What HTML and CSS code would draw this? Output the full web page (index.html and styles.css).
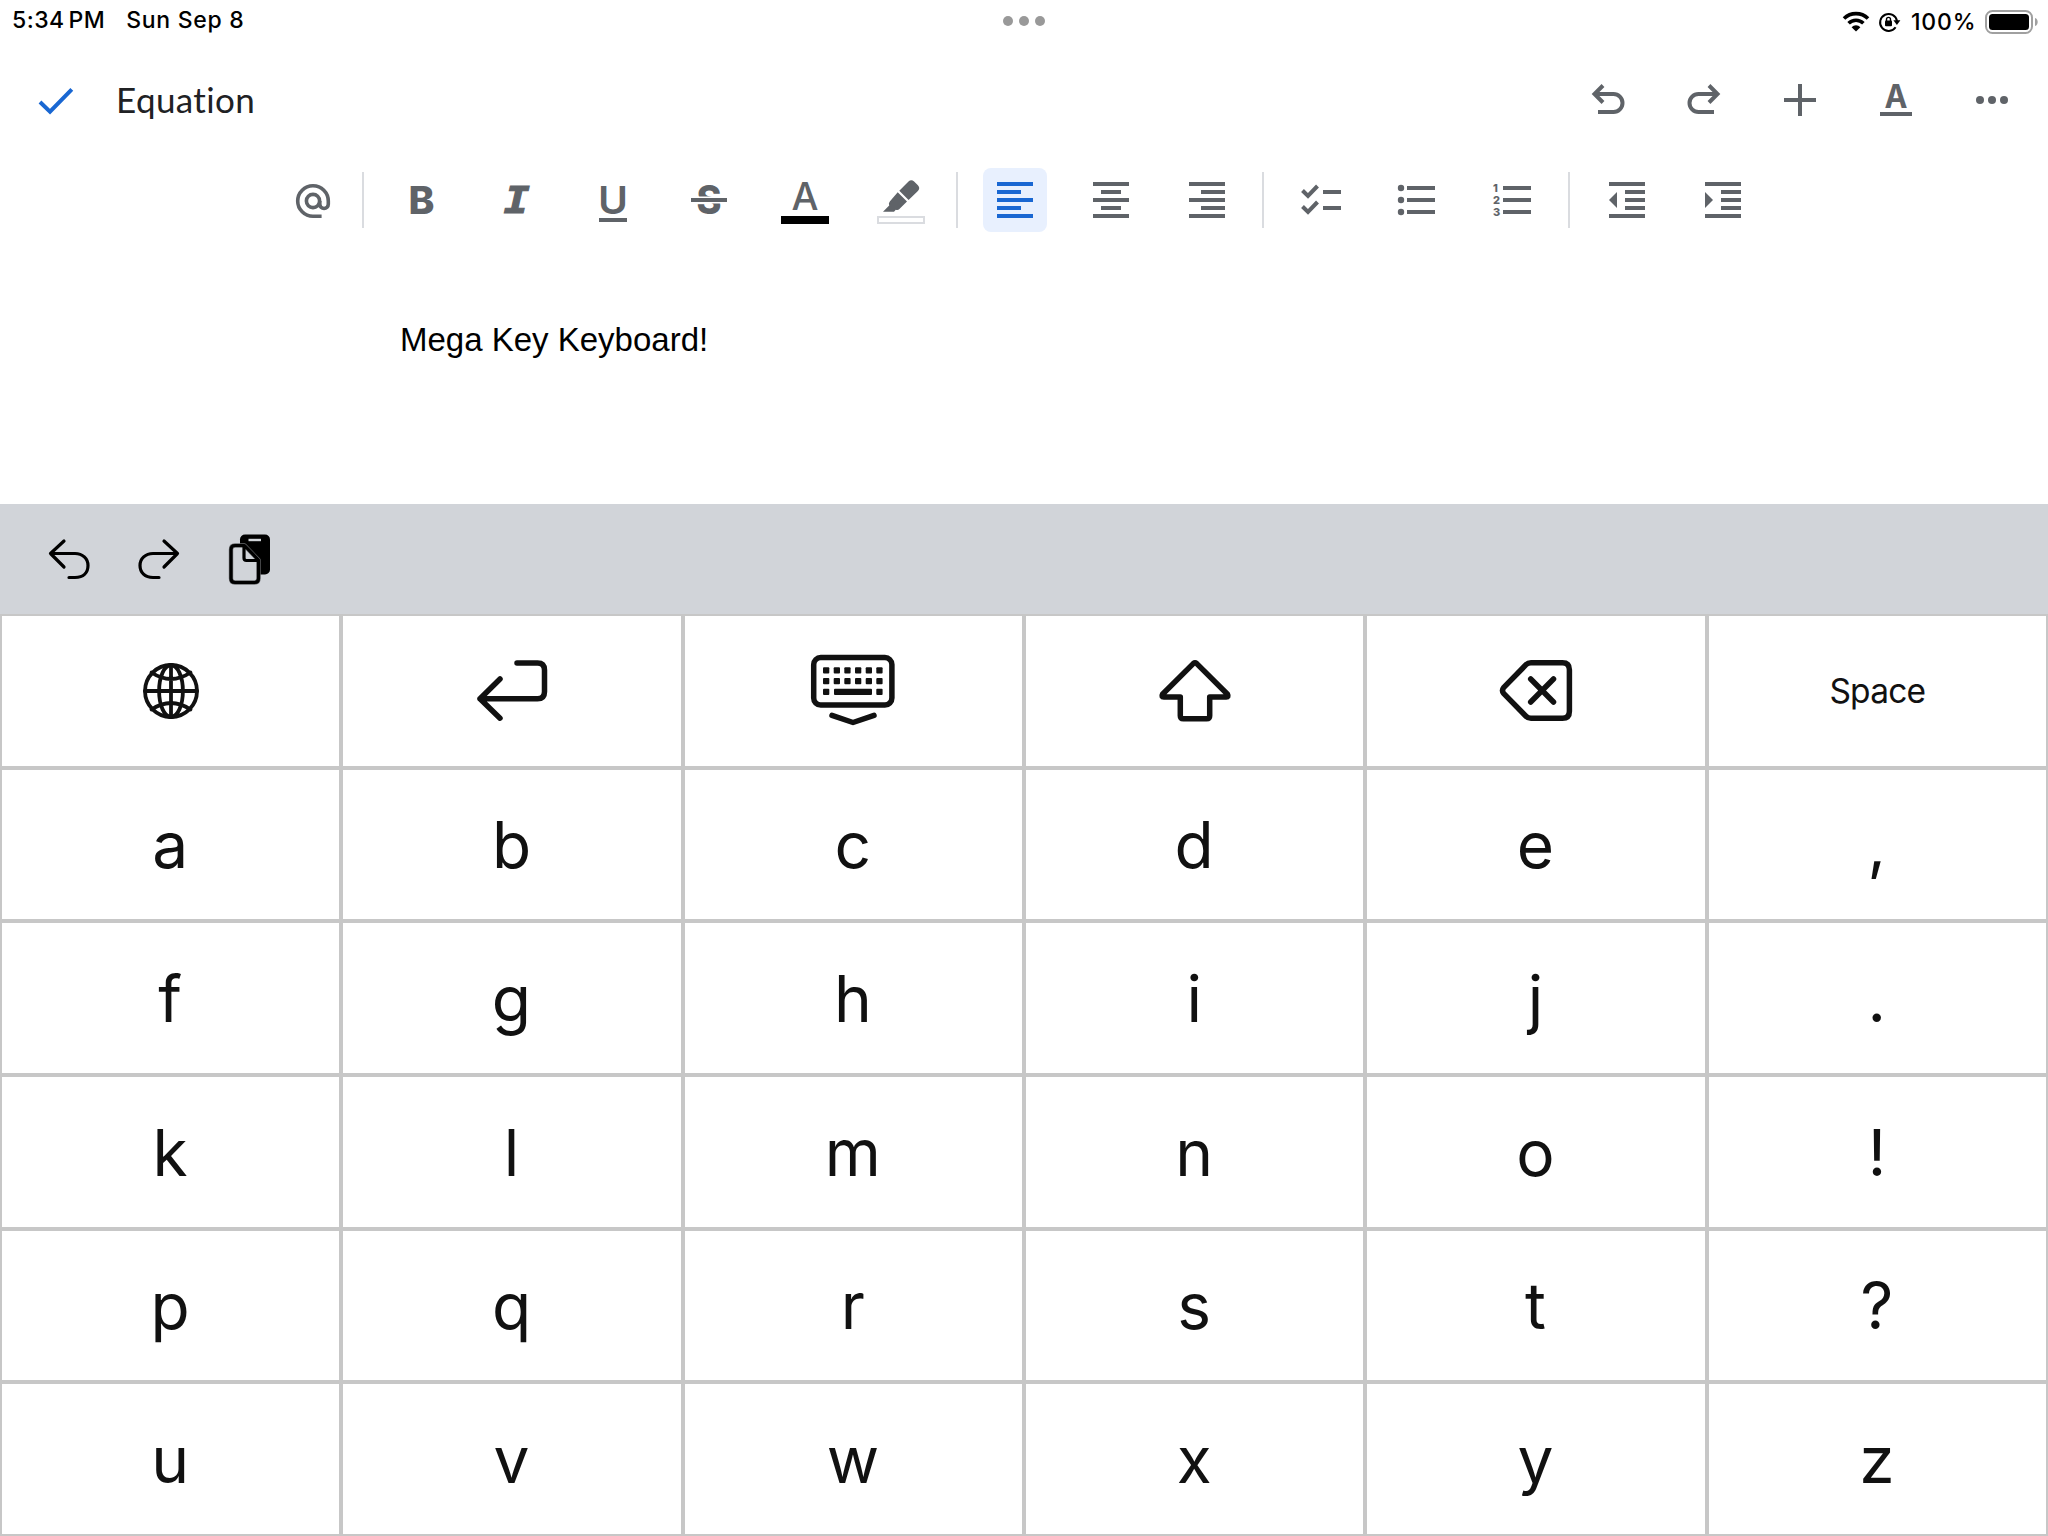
FILE: index.html
```html
<!DOCTYPE html>
<html lang="en">
<head>
<meta charset="utf-8">
<title>Equation</title>
<link rel="stylesheet" href="styles.css">
</head>
<body>
<div class="screen">
  <header class="status">
    <div class="status-left"><span class="clock">5:34<span class="thin"> </span>PM</span><span class="date">Sun Sep 8</span></div>
    <div class="multitask"><i></i><i></i><i></i></div>
    <div class="status-right">
      <svg class="wifi" width="28" height="20" viewBox="0 0 28 20"><path d="M2 6.6a17 17 0 0 1 24 0M6.6 11.3a10.5 10.5 0 0 1 14.8 0" fill="none" stroke="#000" stroke-width="3.6"/><path d="M14 19.6l-4.4-4.4a6.2 6.2 0 0 1 8.8 0z"/></svg>
      <svg class="lock" width="22" height="20" viewBox="0 0 22 20"><path d="M18 9A8.500 8.500 0 1 0 16.600 15.300" fill="none" stroke="#000" stroke-width="2"/><path d="M14.400 8.300h7l-3.500 4.800z"/><rect x="6" y="8.400" width="7" height="5.800" rx="1"/><path d="M7.500 9V7.400a2 2 0 0 1 4 0V9" fill="none" stroke="#000" stroke-width="1.400"/></svg>
      <span class="percent">100%</span>
      <svg class="battery" width="54" height="24" viewBox="0 0 54 24"><rect x="1" y="1" width="46" height="22" rx="6.5" fill="none" stroke="#a0a0a0" stroke-width="2"/><rect x="4" y="4" width="40" height="16" rx="3.5"/><path d="M50 8c3.6 1 3.6 7 0 8z" fill="#a0a0a0"/></svg>
    </div>
  </header>

  <nav class="titlebar">
    <svg class="done" width="36" height="28" viewBox="0 0 36 28"><path d="M2 15l10 9.6L33.8 2.4" fill="none" stroke="#1967d2" stroke-width="4"/></svg>
    <h1>Equation</h1>
    <div class="actions">
      <div class="slot"><svg class="ico" viewBox="0 0 48 48"><path d="M14 36h15.500a9 9 0 0 0 0-18H11M19 9.500L10.500 18l8.500 8.500"/></svg></div>
      <div class="slot"><svg class="ico" viewBox="0 0 48 48"><path d="M34 36H18.500a9 9 0 0 1 0-18H37M29 9.500l8.500 8.500-8.500 8.500"/></svg></div>
      <div class="slot"><svg class="ico" viewBox="0 0 48 48"><path d="M24 8v32M8 24h32"/></svg></div>
      <div class="slot"><svg class="ico" viewBox="0 0 48 48"><text x="12.500" y="32" class="glyph title-a" textLength="23" lengthAdjust="spacingAndGlyphs">A</text><path d="M8 38h32"/></svg></div>
      <div class="slot"><svg class="ico fill" viewBox="0 0 48 48"><circle cx="12" cy="24" r="4"/><circle cx="24" cy="24" r="4"/><circle cx="36" cy="24" r="4"/></svg></div>
    </div>
  </nav>

  <div class="toolbar">
    <div class="slot"><svg class="ico" viewBox="0 0 48 48"><g stroke-width="3.600"><circle cx="24" cy="25" r="6.600"/><path d="M32.600 40.300H24A15.300 15.300 0 1 1 39.300 25v3.200a4.200 4.200 0 0 1-8.500 0V25"/></g></svg></div>
    <i class="sep first"></i>
    <div class="slot"><svg class="ico" viewBox="0 0 48 48"><text x="11.600" y="38" class="glyph bold" textLength="26" lengthAdjust="spacingAndGlyphs">B</text></svg></div>
    <div class="slot"><svg class="ico" viewBox="0 0 48 48"><text x="10.800" y="37.300" class="glyph italic" textLength="26" lengthAdjust="spacingAndGlyphs">I</text></svg></div>
    <div class="slot"><svg class="ico" viewBox="0 0 48 48"><text x="9" y="37.500" class="glyph under" textLength="30" lengthAdjust="spacingAndGlyphs">U</text><path d="M10 44h28"/></svg></div>
    <div class="slot"><svg class="ico" viewBox="0 0 48 48"><text x="11.600" y="37.500" class="glyph strike" textLength="25" lengthAdjust="spacingAndGlyphs">S</text><path d="M6 24h36" stroke="#fff" stroke-width="7"/><path d="M6 24h36"/></svg></div>
    <div class="slot"><svg class="ico" viewBox="0 0 48 48"><text x="10.600" y="34" class="glyph color-a" textLength="27" lengthAdjust="spacingAndGlyphs">A</text><path d="M0 44h48" stroke="#000" stroke-width="8"/></svg></div>
    <div class="slot"><svg class="ico fill" viewBox="0 0 48 48"><path d="M31.500 5.500q2.800-2.600 5.600 0l3.800 3.800q2.700 2.800 0 5.600l-9.300 9.100-9.300-9.300zM20.700 16.200l9.300 9.300-7.600 7.600q-1.600 1.500-3.600.6L17 35.800H6l6.200-6.300q-1-2.500.8-4.300z"/><rect x="1" y="41" width="46" height="6" fill="#fff" stroke="#dadce0" stroke-width="2"/></svg></div>
    <i class="sep"></i>
    <div class="slot"><div class="active"><svg class="ico" viewBox="0 0 48 48"><path d="M6 8h36M6 16h24M6 24h36M6 32h24M6 40h36"/></svg></div></div>
    <div class="slot"><svg class="ico" viewBox="0 0 48 48"><path d="M6 8h36M14 16h20M6 24h36M14 32h20M6 40h36"/></svg></div>
    <div class="slot"><svg class="ico" viewBox="0 0 48 48"><path d="M6 8h36M18 16h24M6 24h36M18 32h24M6 40h36"/></svg></div>
    <i class="sep"></i>
    <div class="slot"><svg class="ico" viewBox="0 0 48 48"><path d="M26 16h18M26 32h18M5.500 14.500l5.500 5.500L20.500 10M5.500 30.500l5.500 5.500L20.500 26"/></svg></div>
    <div class="slot"><svg class="ico" viewBox="0 0 48 48"><path d="M14 12h28M14 24h28M14 36h28"/><g fill="#5f6368" stroke="none"><circle cx="8" cy="12" r="3.200"/><circle cx="8" cy="24" r="3.200"/><circle cx="8" cy="36" r="3.200"/></g></svg></div>
    <div class="slot"><svg class="ico" viewBox="0 0 48 48"><path d="M14 12h28M14 24h28M14 36h28"/><g class="glyph num"><text x="4" y="16">1</text><text x="4" y="28">2</text><text x="4" y="40">3</text></g></svg></div>
    <i class="sep"></i>
    <div class="slot"><svg class="ico" viewBox="0 0 48 48"><path d="M6 8h36M22 16h20M22 24h20M22 32h20M6 40h36"/><path d="M14 16v16l-8-8z" fill="#5f6368" stroke="none"/></svg></div>
    <div class="slot"><svg class="ico" viewBox="0 0 48 48"><path d="M6 8h36M22 16h20M22 24h20M22 32h20M6 40h36"/><path d="M6 16v16l8-8z" fill="#5f6368" stroke="none"/></svg></div>
  </div>

  <main class="document"><p>Mega Key Keyboard!</p></main>

  <section class="keyboard">
    <div class="shortcuts">
      <svg width="42" height="42" viewBox="0 0 42 42"><path d="M16 3L2.500 15.500 16 29M2.500 15.500H27c7.500 0 13 5 13 12s-4.500 12-13 12h-6"/></svg>
      <svg width="42" height="42" viewBox="0 0 42 42"><path d="M26 3l13.500 12.500L26 29M39.500 15.500H15c-7.500 0-13 5-13 12s5 12 13 12h6"/></svg>
      <svg class="paste" width="42" height="52" viewBox="0 0 42 52"><rect x="11" y="1.500" width="30" height="40" rx="5" fill="#000" stroke="none"/><path d="M19.500 7h12.500" stroke="#d1d4d9" stroke-width="2.400" stroke-linecap="butt"/><path d="M6 12.500h9.500L29.500 27v18.500q0 4-4 4H6q-4 0-4-4v-29q0-4 4-4z" fill="#d1d4d9" stroke="#6b6d70" stroke-width="4.400"/><path d="M6 12.500h9.500L29.500 27v18.500q0 4-4 4H6q-4 0-4-4v-29q0-4 4-4zM15 13v12q0 2.500 2.500 2.500H29"/></svg>
    </div>
    <div class="keys">
      <div class="key"><svg width="56" height="56" viewBox="-28 -28 56 56" stroke-width="3.800"><circle r="26"/><ellipse rx="11.900" ry="26"/><path d="M0-26V26M-26 0H26M-19.500-18.500Q0-5.500 19.500-18.500M-19.500 18.500Q0 5.500 19.500 18.500"/></svg></div>
      <div class="key"><svg width="80" height="80" viewBox="0 0 80 80"><path d="M45 12h20.500q7 0 7 7v21.700q0 7-7 7H8M28 28L8 47.700l20 19.500"/></svg></div>
      <div class="key"><svg width="96" height="80" viewBox="0 0 96 80"><rect x="8.700" y="6.600" width="78.200" height="47.400" rx="7"/><path d="M27 64.300l21 7.200 21-7.200"/><g fill="#111" stroke="none"><rect x="18" y="16.300" width="6.300" height="6.300" rx="1"/><rect x="28.700" y="16.300" width="6.300" height="6.300" rx="1"/><rect x="39.300" y="16.300" width="6.300" height="6.300" rx="1"/><rect x="50" y="16.300" width="6.300" height="6.300" rx="1"/><rect x="60.700" y="16.300" width="6.300" height="6.300" rx="1"/><rect x="71.300" y="16.300" width="6.300" height="6.300" rx="1"/><rect x="18" y="27" width="6.300" height="6.300" rx="1"/><rect x="28.700" y="27" width="6.300" height="6.300" rx="1"/><rect x="39.300" y="27" width="6.300" height="6.300" rx="1"/><rect x="50" y="27" width="6.300" height="6.300" rx="1"/><rect x="60.700" y="27" width="6.300" height="6.300" rx="1"/><rect x="71.300" y="27" width="6.300" height="6.300" rx="1"/><rect x="18" y="37.700" width="6.300" height="6.300" rx="1"/><rect x="29" y="37.700" width="38" height="6.300" rx="1"/><rect x="71.300" y="37.700" width="6.300" height="6.300" rx="1"/></g></svg></div>
      <div class="key"><svg width="80" height="80" viewBox="0 0 80 80"><path d="M38.500 12.400q1.500-1.300 3 0L72.500 43.300q1.500 2.700-1.300 2.700H54.700v18.700q0 3-3 3H28.300q-3 0-3-3V46H8.800q-2.800 0-1.300-2.700z"/></svg></div>
      <div class="key"><svg width="80" height="80" viewBox="0 0 80 80"><path d="M35 11.700h31.400q7 0 7 7v41.600q0 7-7 7H35q-3 0-5-2L7.600 42.300q-2.200-2.800 0-5.600L30 13.700q2-2 5-2zM34.700 28l22.800 23M57.500 28L34.700 51"/></svg></div>
      <div class="key word">Space</div>
      <div class="key">a</div><div class="key">b</div><div class="key">c</div><div class="key">d</div><div class="key">e</div><div class="key">,</div>
      <div class="key">f</div><div class="key">g</div><div class="key">h</div><div class="key">i</div><div class="key">j</div><div class="key">.</div>
      <div class="key">k</div><div class="key">l</div><div class="key">m</div><div class="key">n</div><div class="key">o</div><div class="key">!</div>
      <div class="key">p</div><div class="key">q</div><div class="key">r</div><div class="key">s</div><div class="key">t</div><div class="key">?</div>
      <div class="key">u</div><div class="key">v</div><div class="key">w</div><div class="key">x</div><div class="key">y</div><div class="key">z</div>
    </div>
  </section>
</div>
</body>
</html>
```
FILE: styles.css
```css
* { box-sizing: border-box; }
body { margin: 0; background: #fff; }
svg { display: block; flex: none; overflow: visible; }

.screen {
  width: 2048px;
  height: 1536px;
  display: flex;
  flex-direction: column;
  overflow: hidden;
  font-family: Inter, "Liberation Sans", sans-serif;
}

/* status bar */
.status {
  height: 40px;
  display: grid;
  grid-template-columns: 1fr auto 1fr;
  align-items: center;
  color: #000;
  font-size: 23px;
  font-weight: 500;
  line-height: 40px;
}
.status-left { display: flex; gap: 21px; padding-left: 12px; }
.clock { letter-spacing: 0.5px; }
.thin { font-size: 12px; }
.date { letter-spacing: 0.7px; }
.multitask { display: flex; gap: 6px; padding-bottom: 2px; }
.multitask i { width: 10px; height: 10px; border-radius: 50%; background: #999; }
.status-right { display: flex; align-items: center; justify-content: flex-end; padding-right: 9px; }
.lock { margin-left: 9px; }
.percent { margin-left: 10px; width: 65px; white-space: nowrap; letter-spacing: 0.8px; }
.battery { margin-left: 9px; }

/* title bar */
.titlebar {
  height: 120px;
  display: flex;
  align-items: center;
  padding: 0 8px 0 38px;
}
.titlebar h1 {
  margin: 0 auto 3px 42px;
  color: #202124;
  font: 400 35px/48px Lato, "Open Sans", sans-serif;
  font-variant-ligatures: none;
  letter-spacing: 0.4px;
}
.done { margin-top: 1px; }
.actions { display: flex; }
.slot { width: 96px; display: flex; justify-content: center; align-items: center; }
.ico { width: 48px; height: 48px; fill: none; stroke: #5f6368; stroke-width: 4; }
.ico.fill { fill: #5f6368; stroke: none; }

/* formatting toolbar */
.toolbar { height: 80px; display: flex; align-items: center; padding-left: 265px; }
.sep { width: 2px; height: 56px; margin: 0 9px 0 7px; background: #dadce0; }
.sep.first { margin-left: 1px; }
.active { padding: 8px; border-radius: 8px; background: #e8f0fe; }
.active .ico { stroke: #1967d2; }
.glyph { fill: #5f6368; stroke: none; font-family: Inter, sans-serif; }
.title-a { font-size: 33px; font-weight: 700; }
.bold { font-size: 38.500px; font-weight: 800; }
.italic { font: italic 700 36.500px "DejaVu Sans Mono", monospace; stroke: #5f6368; stroke-width: 1px; }
.under { font-size: 38px; font-weight: 600; }
.strike { font-size: 39px; font-weight: 800; }
.color-a { font-size: 38.500px; font-weight: 500; }
.num { font-size: 11px; font-weight: 800; }

/* page */
.document { height: 264px; padding: 80px 400px 0 400px; }
.document p { margin: 0; color: #000; font: 33px/40px "Liberation Sans", Arial, sans-serif; }

/* on-screen keyboard */
.keyboard { flex: 1; display: flex; flex-direction: column; }
.shortcuts {
  height: 110px;
  display: flex;
  align-items: center;
  gap: 48px;
  padding-left: 48px;
  background: #d1d4d9;
}
.shortcuts svg { fill: none; stroke: #000; stroke-width: 3.200; stroke-linecap: round; stroke-linejoin: round; }
.shortcuts .paste { margin-left: 1px; }
.keys { flex: 1; display: grid; grid-template-columns: repeat(6, 1fr); grid-template-rows: repeat(6, 1fr); }
.key {
  display: flex;
  align-items: center;
  justify-content: center;
  min-height: 0;
  border: 2px solid #c7c7c7;
  padding: 2px 1px 0 0;
  color: #111;
  font-size: 64px;
  font-weight: 430;
  line-height: 76px;
}
.key:has(svg), .key.word { padding: 0; }
.key svg { fill: none; stroke: #111; stroke-linecap: round; stroke-linejoin: round; }
.key svg:not([stroke-width]) { stroke-width: 5.500px; }
.key.word { font-size: 33.500px; font-weight: 400; letter-spacing: -0.800px; }
```
